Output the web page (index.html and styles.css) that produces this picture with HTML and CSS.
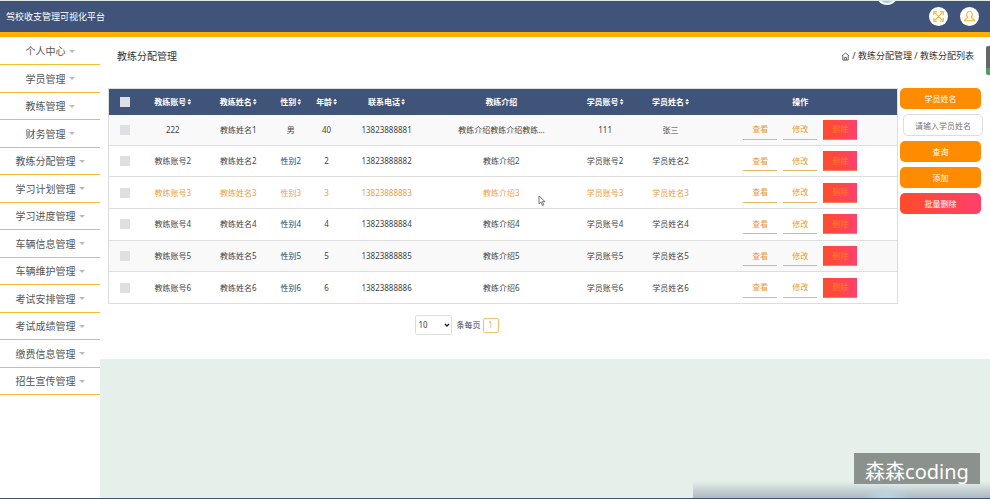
FILE: index.html
```html
<!DOCTYPE html>
<html lang="zh-CN">
<head>
<meta charset="utf-8">
<title>驾校收支管理可视化平台</title>
<link rel="stylesheet" href="styles.css">
</head>
<body>
<header class="topbar">
  <h1 class="brand">驾校收支管理可视化平台</h1>
  <span class="bubble"></span>
  <div class="tools">
    <button class="round" type="button" aria-label="全屏">
      <svg viewBox="0 0 20 20"><path d="M6 6l8 8M14 6l-8 8M5 8.500V5h3.500M11.500 5H15v3.500M15 11.500V15h-3.500M8.500 15H5v-3.500"/></svg>
    </button>
    <button class="round" type="button" aria-label="用户">
      <svg viewBox="0 0 20 20"><path d="M10 4.500a3 3.500 0 0 1 1.800 6.300c0 1.200 3.200.8 3.400 3.700H4.800c.2-2.900 3.400-2.500 3.400-3.700A3 3.500 0 0 1 10 4.500z"/></svg>
    </button>
  </div>
</header>
<div class="shell">
  <nav class="sidebar">
    <a href="#">个人中心</a>
    <a href="#">学员管理</a>
    <a href="#">教练管理</a>
    <a href="#">财务管理</a>
    <a href="#">教练分配管理</a>
    <a href="#">学习计划管理</a>
    <a href="#">学习进度管理</a>
    <a href="#">车辆信息管理</a>
    <a href="#">车辆维护管理</a>
    <a href="#">考试安排管理</a>
    <a href="#">考试成绩管理</a>
    <a href="#">缴费信息管理</a>
    <a href="#">招生宣传管理</a>
  </nav>
  <main class="main">
    <section class="panel">
      <div class="heading">
        <h2>教练分配管理</h2>
        <div class="crumbs">
          <svg viewBox="0 0 10 10"><path d="M1 4.500L5 1l4 3.500M2 4v5h6V4M4 9V6h2v3"/></svg>
          <span>/ 教练分配管理 / 教练分配列表</span>
        </div>
      </div>
      <div class="workspace">
        <div class="listing">
          <table class="grid">
            <colgroup><col class="c-check"><col class="c-name"><col class="c-name"><col class="c-sex"><col class="c-age"><col class="c-phone"><col class="c-intro"><col class="c-name"><col class="c-name"><col class="c-ops"></colgroup>
            <thead>
              <tr><th><input type="checkbox" aria-label="全选"></th><th class="sort">教练账号</th><th class="sort">教练姓名</th><th class="sort">性别</th><th class="sort">年龄</th><th class="sort">联系电话</th><th>教练介绍</th><th class="sort">学员账号</th><th class="sort">学员姓名</th><th>操作</th></tr>
            </thead>
            <tbody>
              <tr class="shade"><td><input type="checkbox" aria-label="选择第1行"></td><td>222</td><td>教练姓名1</td><td>男</td><td>40</td><td>13823888881</td><td>教练介绍教练介绍教练...</td><td>111</td><td>张三</td><td><div class="ops"><button type="button">查看</button><button type="button">修改</button><button type="button" class="del">删除</button></div></td></tr>
              <tr><td><input type="checkbox" aria-label="选择第2行"></td><td>教练账号2</td><td>教练姓名2</td><td>性别2</td><td>2</td><td>13823888882</td><td>教练介绍2</td><td>学员账号2</td><td>学员姓名2</td><td><div class="ops"><button type="button">查看</button><button type="button">修改</button><button type="button" class="del">删除</button></div></td></tr>
              <tr class="active"><td><input type="checkbox" aria-label="选择第3行"></td><td>教练账号3</td><td>教练姓名3</td><td>性别3</td><td>3</td><td>13823888883</td><td>教练介绍3</td><td>学员账号3</td><td>学员姓名3</td><td><div class="ops"><button type="button">查看</button><button type="button">修改</button><button type="button" class="del">删除</button></div></td></tr>
              <tr><td><input type="checkbox" aria-label="选择第4行"></td><td>教练账号4</td><td>教练姓名4</td><td>性别4</td><td>4</td><td>13823888884</td><td>教练介绍4</td><td>学员账号4</td><td>学员姓名4</td><td><div class="ops"><button type="button">查看</button><button type="button">修改</button><button type="button" class="del">删除</button></div></td></tr>
              <tr class="shade"><td><input type="checkbox" aria-label="选择第5行"></td><td>教练账号5</td><td>教练姓名5</td><td>性别5</td><td>5</td><td>13823888885</td><td>教练介绍5</td><td>学员账号5</td><td>学员姓名5</td><td><div class="ops"><button type="button">查看</button><button type="button">修改</button><button type="button" class="del">删除</button></div></td></tr>
              <tr><td><input type="checkbox" aria-label="选择第6行"></td><td>教练账号6</td><td>教练姓名6</td><td>性别6</td><td>6</td><td>13823888886</td><td>教练介绍6</td><td>学员账号6</td><td>学员姓名6</td><td><div class="ops"><button type="button">查看</button><button type="button">修改</button><button type="button" class="del">删除</button></div></td></tr>
            </tbody>
          </table>
          <div class="pager">
            <span class="size">
              <select id="size"><option>10</option></select>
              <svg viewBox="0 0 6 4"><path d="M1 1l2 2 2-2"/></svg>
            </span>
            <label for="size">条每页</label>
            <button type="button">1</button>
          </div>
        </div>
        <form class="filters">
          <label for="student">学员姓名</label>
          <input id="student" type="text" placeholder="请输入学员姓名">
          <button type="button">查询</button>
          <button type="button">添加</button>
          <button type="button" class="danger">批量删除</button>
        </form>
      </div>
    </section>
  </main>
</div>
<span class="edge"></span>
<svg class="cursor" viewBox="0 0 8 12"><path d="M1 1v8l2-2 1.500 3.500 1.300-.6L4.300 6.600H7z"/></svg>
<div class="haze"></div>
<div class="watermark">森森coding</div>
</body>
</html>
```
FILE: styles.css
```css
* { box-sizing: border-box; }
body {
  margin: 0;
  min-height: 100vh;
  display: flex;
  flex-direction: column;
  position: relative;
  overflow-x: hidden;
  border-top: 1px solid #dfeae8;
  border-bottom: 1px solid #405378;
  background: #e6f0eb;
  color: #444;
  font: 8px/12px "Noto Sans", "Noto Sans CJK SC", sans-serif;
}
button, input, select { font: inherit; color: inherit; margin: 0; }
button { cursor: pointer; border: 0; padding: 0; }
h1, h2 { margin: 0; font-weight: 400; }

.topbar {
  position: relative;
  display: flex;
  align-items: center;
  justify-content: space-between;
  height: 36px;
  padding: 0 11px 0 6px;
  background: #405378;
  border-bottom: 5px solid #ffb000;
}
.brand { font-size: 9px; color: #fff; }
.bubble {
  position: absolute;
  top: -18px;
  right: 92px;
  width: 22px;
  height: 22px;
  border: 2px solid #fff;
  border-radius: 50%;
  background: #87d3f3;
}
.tools { display: flex; gap: 12px; }
.round { width: 19px; height: 19px; border-radius: 50%; background: #fff; }
.round svg { display: block; width: 19px; height: 19px; fill: none; stroke: #f7b32b; stroke-width: 1.2; }

.shell { flex: 1; display: flex; }
.sidebar {
  flex: 0 0 100px;
  display: flex;
  flex-direction: column;
  padding-top: 1px;
  background: #fff;
}
.sidebar a {
  display: flex;
  align-items: center;
  justify-content: center;
  gap: 3px;
  height: 27px;
  border-bottom: 1px solid #f5bd33;
  color: #555;
  font-size: 10px;
  text-decoration: none;
}
.sidebar a:nth-child(even) { height: 28px; }
.sidebar a::after {
  content: "";
  border: 3px solid transparent;
  border-top-color: #bbb;
  border-bottom: 0;
}

.main { flex: 1; min-width: 0; }
.panel { background: #fff; padding: 12px 7px 24px 8px; }
.heading {
  display: flex;
  align-items: center;
  justify-content: space-between;
  padding: 0 9px;
  height: 14px;
}
.heading h2 { font-size: 10px; color: #333; }
.crumbs { display: flex; align-items: center; gap: 2px; color: #333; font-size: 9px; }
.crumbs svg { width: 9px; height: 9px; fill: none; stroke: #555; }

.workspace { display: flex; gap: 2px; padding-top: 25px; }
.listing { flex: 1; }
.grid {
  width: 100%;
  height: 216px;
  table-layout: fixed;
  border-collapse: collapse;
  border: 1px solid #ddd;
  text-align: center;
}
.c-check { width: 4%; }
.c-name { width: 8.3%; }
.c-sex { width: 5%; }
.c-age { width: 4.1%; }
.c-phone { width: 11.1%; }
.c-intro { width: 18%; }
.grid th, .grid td { padding: 0; white-space: nowrap; }
.grid th { height: 26px; background: #405378; color: #fff; font-weight: 700; }
.grid td { border-bottom: 1px solid #ddd; }
.sort::after {
  content: "";
  display: inline-block;
  width: 4px;
  height: 6px;
  margin-left: 1px;
  background: currentColor;
  clip-path: polygon(50% 0, 100% 40%, 0 40%, 0 60%, 100% 60%, 50% 100%, 0 60%, 0 40%);
}
.shade { background: #f9f9f9; }
.active { color: #eda045; }
.grid input {
  appearance: none;
  display: block;
  width: 10px;
  height: 10px;
  margin: 0 auto;
  background: #dce0e4;
}
.ops { display: flex; justify-content: center; gap: 6px; }
.ops button {
  width: 34px;
  height: 20px;
  background: transparent;
  border-bottom: 1px solid #e9b65d;
  color: #e99a3c;
}
.ops .del {
  background: linear-gradient(90deg, #ff4b2b, #ff416c);
  color: #ff7a1c;
  border-bottom-color: #f4824c;
}

.pager { display: flex; align-items: center; padding: 11px 0 0 38.8%; }
.size { position: relative; display: flex; margin-right: 5px; }
.size select {
  appearance: none;
  width: 37px;
  height: 20px;
  padding: 0 3px;
  border: 1px solid #ddd;
  border-radius: 2px;
  background: #fff;
}
.size svg { position: absolute; right: 2px; top: 8px; width: 6px; height: 4px; fill: none; stroke: #222; stroke-width: 1.4; pointer-events: none; }
.pager button {
  width: 16px;
  height: 15px;
  margin-left: 2px;
  border: 1px solid #f0c070;
  border-radius: 2px;
  background: #fff;
  color: #f0b060;
}

.filters { flex: 0 0 83px; display: flex; flex-direction: column; gap: 5px; }
.filters label, .filters button {
  width: 81px;
  height: 21px;
  line-height: 21px;
  border-radius: 5px;
  background: #ff8c00;
  color: #fff;
  text-align: center;
}
.filters input {
  align-self: flex-end;
  width: 80px;
  height: 22px;
  padding: 0;
  border: 1px solid #ddd;
  border-radius: 5px;
  background: #fff;
  text-align: center;
}
.filters input::placeholder { color: #777; }
.filters .danger { background: linear-gradient(90deg, #ff4b2b, #ff416c); }

.edge {
  position: absolute;
  top: 45px;
  right: 0;
  width: 4px;
  height: 29px;
  border-radius: 2px 0 0 2px;
  background: linear-gradient(#666 76%, #4f9f62 76%);
}
.cursor { position: absolute; left: 538px; top: 194px; width: 8px; height: 12px; fill: #fff; stroke: #555; stroke-width: 0.8; }
.haze {
  position: absolute;
  right: 0;
  bottom: -1px;
  width: 30%;
  height: 18px;
  background:
    radial-gradient(ellipse 24px 14px at 65% 100%, #b9dbe2, transparent),
    linear-gradient(#e6f0eb, #a9b5c0);
}
.watermark {
  position: absolute;
  right: 10px;
  bottom: 14px;
  width: 126px;
  height: 31px;
  background: #8b918c;
  color: #fff;
  font-size: 20px;
  line-height: 38px;
  text-align: center;
}
```
